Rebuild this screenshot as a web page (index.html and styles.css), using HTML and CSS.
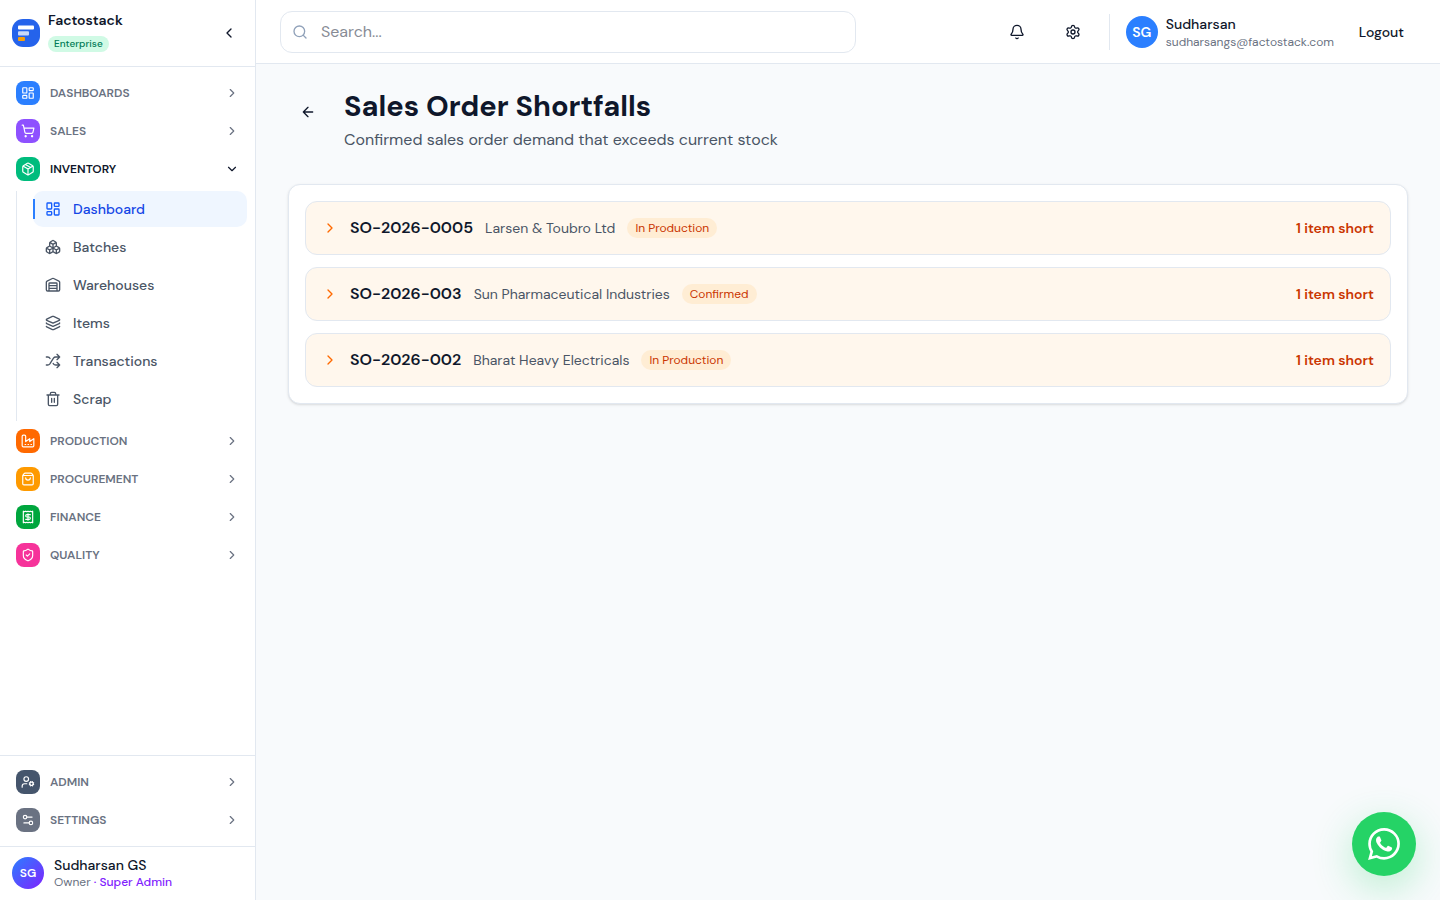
FILE: index.html
```html
<!DOCTYPE html>
<html lang="en">
<head>
<meta charset="utf-8">
<meta name="viewport" content="width=device-width, initial-scale=1">
<title>Sales Order Shortfalls</title>
<link rel="stylesheet" href="styles.css">
</head>
<body>
<svg class="sprite" aria-hidden="true">
  <symbol id="i-left" viewBox="0 0 24 24"><path d="m15 18-6-6 6-6"/></symbol>
  <symbol id="i-right" viewBox="0 0 24 24"><path d="m9 18 6-6-6-6"/></symbol>
  <symbol id="i-down" viewBox="0 0 24 24"><path d="m6 9 6 6 6-6"/></symbol>
  <symbol id="i-arrow" viewBox="0 0 24 24"><path d="m12 19-7-7 7-7M19 12H5"/></symbol>
  <symbol id="i-search" viewBox="0 0 24 24"><circle cx="11" cy="11" r="8"/><path d="m21 21-4.3-4.3"/></symbol>
  <symbol id="i-bell" viewBox="0 0 24 24"><path d="M10.268 21a2 2 0 0 0 3.464 0M3.262 15.326A1 1 0 0 0 4 17h16a1 1 0 0 0 .74-1.673C19.41 13.956 18 12.499 18 8A6 6 0 0 0 6 8c0 4.499-1.411 5.956-2.738 7.326"/></symbol>
  <symbol id="i-gear" viewBox="0 0 24 24"><path d="M9.671 4.136a2.34 2.34 0 0 1 4.659 0 2.34 2.34 0 0 0 3.319 1.915 2.34 2.34 0 0 1 2.33 4.033 2.34 2.34 0 0 0 0 3.831 2.34 2.34 0 0 1-2.33 4.033 2.34 2.34 0 0 0-3.319 1.915 2.34 2.34 0 0 1-4.659 0 2.34 2.34 0 0 0-3.32-1.915 2.34 2.34 0 0 1-2.33-4.033 2.34 2.34 0 0 0 0-3.831A2.34 2.34 0 0 1 6.35 6.051a2.34 2.34 0 0 0 3.319-1.915"/><circle cx="12" cy="12" r="3"/></symbol>
  <symbol id="i-dash" viewBox="0 0 24 24"><rect width="7" height="9" x="3" y="3" rx="1"/><rect width="7" height="5" x="14" y="3" rx="1"/><rect width="7" height="9" x="14" y="12" rx="1"/><rect width="7" height="5" x="3" y="16" rx="1"/></symbol>
  <symbol id="i-cart" viewBox="0 0 24 24"><circle cx="8" cy="21" r="1"/><circle cx="19" cy="21" r="1"/><path d="M2.05 2.05h2l2.66 12.42a2 2 0 0 0 2 1.58h9.78a2 2 0 0 0 1.95-1.57l1.65-7.43H5.12"/></symbol>
  <symbol id="i-package" viewBox="0 0 24 24"><path d="M11 21.73a2 2 0 0 0 2 0l7-4A2 2 0 0 0 21 16V8a2 2 0 0 0-1-1.73l-7-4a2 2 0 0 0-2 0l-7 4A2 2 0 0 0 3 8v8a2 2 0 0 0 1 1.73zM12 22V12M3.29 7 12 12l8.71-5M7.5 4.27l9 5.15"/></symbol>
  <symbol id="i-boxes" viewBox="0 0 24 24"><path d="M2.97 12.92A2 2 0 0 0 2 14.63v3.24a2 2 0 0 0 .97 1.71l3 1.8a2 2 0 0 0 2.06 0L12 19v-5.5l-5-3ZM7 16.5l-4.74-2.85M7 16.5l5-3M7 16.5v5.17M12 13.5V19l3.97 2.38a2 2 0 0 0 2.06 0l3-1.8a2 2 0 0 0 .97-1.71v-3.24a2 2 0 0 0-.97-1.71L17 10.5ZM17 16.5l-5-3M17 16.5l4.74-2.85M17 16.5v5.17M7.97 4.42A2 2 0 0 0 7 6.13v4.37l5 3 5-3V6.13a2 2 0 0 0-.97-1.71l-3-1.8a2 2 0 0 0-2.06 0ZM12 8 7.26 5.15M12 8l4.74-2.85M12 13.5V8"/></symbol>
  <symbol id="i-warehouse" viewBox="0 0 24 24"><path d="M18 21V10a1 1 0 0 0-1-1H7a1 1 0 0 0-1 1v11M22 19a2 2 0 0 1-2 2H4a2 2 0 0 1-2-2V8a2 2 0 0 1 1.132-1.803l7.95-3.974a2 2 0 0 1 1.837 0l7.948 3.974A2 2 0 0 1 22 8zM6 13h12M6 17h12"/></symbol>
  <symbol id="i-layers" viewBox="0 0 24 24"><path d="M12.83 2.18a2 2 0 0 0-1.66 0L2.6 6.08a1 1 0 0 0 0 1.83l8.58 3.91a2 2 0 0 0 1.66 0l8.58-3.9a1 1 0 0 0 0-1.83zM2 12a1 1 0 0 0 .58.91l8.6 3.91a2 2 0 0 0 1.65 0l8.58-3.9A1 1 0 0 0 22 12M2 17a1 1 0 0 0 .58.91l8.6 3.91a2 2 0 0 0 1.65 0l8.58-3.9A1 1 0 0 0 22 17"/></symbol>
  <symbol id="i-shuffle" viewBox="0 0 24 24"><path d="m18 14 4 4-4 4M18 2l4 4-4 4M2 18h1.973a4 4 0 0 0 3.3-1.7l5.454-8.6a4 4 0 0 1 3.3-1.7H22M2 6h1.972a4 4 0 0 1 3.6 2.2M22 18h-6.041a4 4 0 0 1-3.3-1.8l-.359-.45"/></symbol>
  <symbol id="i-trash" viewBox="0 0 24 24"><path d="M10 11v6M14 11v6M19 6v14a2 2 0 0 1-2 2H7a2 2 0 0 1-2-2V6M3 6h18M8 6V4a2 2 0 0 1 2-2h4a2 2 0 0 1 2 2v2"/></symbol>
  <symbol id="i-factory" viewBox="0 0 24 24"><path d="M2 20a2 2 0 0 0 2 2h16a2 2 0 0 0 2-2V8l-7 5V8l-7 5V4a2 2 0 0 0-2-2H4a2 2 0 0 0-2 2ZM17 18h1M12 18h1M7 18h1"/></symbol>
  <symbol id="i-bag" viewBox="0 0 24 24"><path d="M16 10a4 4 0 0 1-8 0M3.103 6.034h17.794M3.4 5.467a2 2 0 0 0-.4 1.2V20a2 2 0 0 0 2 2h14a2 2 0 0 0 2-2V6.667a2 2 0 0 0-.4-1.2l-2-2.667A2 2 0 0 0 17 2H7a2 2 0 0 0-1.6.8z"/></symbol>
  <symbol id="i-receipt" viewBox="0 0 24 24"><path d="M4 2v20l2-1 2 1 2-1 2 1 2-1 2 1 2-1 2 1V2l-2 1-2-1-2 1-2-1-2 1-2-1-2 1ZM16 8h-6a2 2 0 1 0 0 4h4a2 2 0 1 1 0 4H8M12 17.5v-11"/></symbol>
  <symbol id="i-shield" viewBox="0 0 24 24"><path d="M20 13c0 5-3.5 7.5-7.66 8.95a1 1 0 0 1-.67-.01C7.5 20.5 4 18 4 13V6a1 1 0 0 1 1-1c2 0 4.5-1.2 6.24-2.72a1.17 1.17 0 0 1 1.52 0C14.51 3.81 17 5 19 5a1 1 0 0 1 1 1zM9 12l2 2 4-4"/></symbol>
  <symbol id="i-usercog" viewBox="0 0 24 24"><circle cx="18" cy="15" r="3"/><circle cx="9" cy="7" r="4"/><path d="M10 15H6a4 4 0 0 0-4 4v2M21.7 16.4l-.9-.3M15.2 13.9l-.9-.3M16.6 18.7l.3-.9M19.1 12.2l.3-.9M19.6 18.7l-.4-1M16.8 12.3l-.4-1M14.3 16.6l1-.4M20.7 13.8l1-.4"/></symbol>
  <symbol id="i-sliders" viewBox="0 0 24 24"><path d="M14 17H5M19 7h-9"/><circle cx="17" cy="17" r="3"/><circle cx="7" cy="7" r="3"/></symbol>
</svg>

<div class="app">
  <aside class="sidebar">
    <div class="brand">
      <svg class="brand-logo" viewBox="0 0 28 28" aria-hidden="true"><rect width="28" height="28" rx="11" fill="#2563eb"/><rect x="6" y="6.4" width="16" height="4.2" rx="1" fill="#fff"/><rect x="6" y="12.2" width="11" height="4.2" rx="1" fill="#fff" opacity=".75"/><rect x="6" y="18" width="7" height="4" rx="1" fill="#f59e0b"/></svg>
      <div class="brand-text">
        <span class="brand-name">Factostack</span>
        <span class="plan">Enterprise</span>
      </div>
      <button class="collapse" type="button" aria-label="Collapse sidebar"><svg class="icon"><use href="#i-left"/></svg></button>
    </div>

    <nav class="nav" aria-label="Main">
      <button class="section" type="button"><span class="tile blue"><svg class="icon"><use href="#i-dash"/></svg></span>DASHBOARDS<svg class="icon chevron"><use href="#i-right"/></svg></button>
      <button class="section" type="button"><span class="tile violet"><svg class="icon"><use href="#i-cart"/></svg></span>SALES<svg class="icon chevron"><use href="#i-right"/></svg></button>
      <button class="section open" type="button" aria-expanded="true"><span class="tile emerald"><svg class="icon"><use href="#i-package"/></svg></span>INVENTORY<svg class="icon chevron"><use href="#i-down"/></svg></button>
      <div class="subnav">
        <a class="link active" href="#" aria-current="page"><svg class="icon"><use href="#i-dash"/></svg>Dashboard</a>
        <a class="link" href="#"><svg class="icon"><use href="#i-boxes"/></svg>Batches</a>
        <a class="link" href="#"><svg class="icon"><use href="#i-warehouse"/></svg>Warehouses</a>
        <a class="link" href="#"><svg class="icon"><use href="#i-layers"/></svg>Items</a>
        <a class="link" href="#"><svg class="icon"><use href="#i-shuffle"/></svg>Transactions</a>
        <a class="link" href="#"><svg class="icon"><use href="#i-trash"/></svg>Scrap</a>
      </div>
      <button class="section" type="button"><span class="tile orange"><svg class="icon"><use href="#i-factory"/></svg></span>PRODUCTION<svg class="icon chevron"><use href="#i-right"/></svg></button>
      <button class="section" type="button"><span class="tile amber"><svg class="icon"><use href="#i-bag"/></svg></span>PROCUREMENT<svg class="icon chevron"><use href="#i-right"/></svg></button>
      <button class="section" type="button"><span class="tile green"><svg class="icon"><use href="#i-receipt"/></svg></span>FINANCE<svg class="icon chevron"><use href="#i-right"/></svg></button>
      <button class="section" type="button"><span class="tile pink"><svg class="icon"><use href="#i-shield"/></svg></span>QUALITY<svg class="icon chevron"><use href="#i-right"/></svg></button>
    </nav>

    <nav class="nav nav-bottom" aria-label="Administration">
      <button class="section" type="button"><span class="tile slate"><svg class="icon"><use href="#i-usercog"/></svg></span>ADMIN<svg class="icon chevron"><use href="#i-right"/></svg></button>
      <button class="section" type="button"><span class="tile gray"><svg class="icon"><use href="#i-sliders"/></svg></span>SETTINGS<svg class="icon chevron"><use href="#i-right"/></svg></button>
    </nav>

    <div class="account">
      <span class="avatar gradient">SG</span>
      <div class="account-text">
        <span class="account-name">Sudharsan GS</span>
        <span class="account-role">Owner <span class="role">· Super Admin</span></span>
      </div>
    </div>
  </aside>

  <div class="content">
    <header class="topbar">
      <label class="search">
        <svg class="icon"><use href="#i-search"/></svg>
        <input type="search" placeholder="Search..." aria-label="Search">
      </label>
      <div class="actions">
        <button class="icon-button" type="button" aria-label="Notifications"><svg class="icon"><use href="#i-bell"/></svg></button>
        <button class="icon-button" type="button" aria-label="Settings"><svg class="icon"><use href="#i-gear"/></svg></button>
        <div class="user">
          <span class="avatar solid">SG</span>
          <div class="user-text">
            <span class="user-name">Sudharsan</span>
            <span class="user-mail">sudharsangs@factostack.com</span>
          </div>
          <button class="logout" type="button">Logout</button>
        </div>
      </div>
    </header>

    <main class="page">
      <div class="page-head">
        <button class="back" type="button" aria-label="Back"><svg class="icon"><use href="#i-arrow"/></svg></button>
        <div>
          <h1 class="title">Sales Order Shortfalls</h1>
          <p class="subtitle">Confirmed sales order demand that exceeds current stock</p>
        </div>
      </div>

      <section class="card">
        <button class="order" type="button"><svg class="icon"><use href="#i-right"/></svg><span class="order-id">SO-2026-0005</span><span class="customer">Larsen &amp; Toubro Ltd</span><span class="status">In Production</span><span class="short">1 item short</span></button>
        <button class="order" type="button"><svg class="icon"><use href="#i-right"/></svg><span class="order-id">SO-2026-003</span><span class="customer">Sun Pharmaceutical Industries</span><span class="status">Confirmed</span><span class="short">1 item short</span></button>
        <button class="order" type="button"><svg class="icon"><use href="#i-right"/></svg><span class="order-id">SO-2026-002</span><span class="customer">Bharat Heavy Electricals</span><span class="status">In Production</span><span class="short">1 item short</span></button>
      </section>
    </main>
  </div>
</div>

<a class="whatsapp" href="#" aria-label="Chat on WhatsApp">
  <svg viewBox="0 0 24 24" aria-hidden="true"><path d="M17.472 14.382c-.297-.149-1.758-.867-2.03-.967-.273-.099-.471-.148-.67.15-.197.297-.767.966-.94 1.164-.173.199-.347.223-.644.075-.297-.15-1.255-.463-2.39-1.475-.883-.788-1.48-1.761-1.653-2.059-.173-.297-.018-.458.13-.606.134-.133.298-.347.446-.52.149-.174.198-.298.298-.497.099-.198.05-.371-.025-.52-.075-.149-.669-1.612-.916-2.207-.242-.579-.487-.5-.669-.51-.173-.008-.371-.01-.57-.01-.198 0-.52.074-.792.372-.272.297-1.04 1.016-1.04 2.479 0 1.462 1.065 2.875 1.213 3.074.149.198 2.096 3.2 5.077 4.487.709.306 1.262.489 1.694.625.712.227 1.36.195 1.871.118.571-.085 1.758-.719 2.006-1.413.248-.694.248-1.289.173-1.413-.074-.124-.272-.198-.57-.347m-5.421 7.403h-.004a9.87 9.87 0 0 1-5.031-1.378l-.361-.214-3.741.982.998-3.648-.235-.374a9.86 9.86 0 0 1-1.51-5.26c.001-5.45 4.436-9.884 9.888-9.884 2.64 0 5.122 1.03 6.988 2.898a9.825 9.825 0 0 1 2.893 6.994c-.003 5.45-4.437 9.884-9.885 9.884m8.413-18.297A11.815 11.815 0 0 0 12.05 0C5.495 0 .16 5.335.157 11.892c0 2.096.547 4.142 1.588 5.945L.057 24l6.305-1.654a11.882 11.882 0 0 0 5.683 1.448h.005c6.554 0 11.89-5.335 11.893-11.893a11.821 11.821 0 0 0-3.48-8.413z"/></svg>
</a>
</body>
</html>
```
FILE: styles.css
```css
*,
*::before {
  box-sizing: border-box;
}

body {
  margin: 0;
  background: #f8fafc;
  color: #0f172b;
  font-family: "DM Sans", Inter, "Liberation Sans", sans-serif;
  font-size: 14px;
  line-height: 20px;
}

button,
input {
  font: inherit;
  color: inherit;
}

button {
  padding: 0;
  border: 0;
  background: none;
  cursor: pointer;
}

a {
  color: inherit;
  text-decoration: none;
}

.sprite {
  display: none;
}

.icon {
  flex: none;
  width: 16px;
  height: 16px;
  fill: none;
  stroke: currentColor;
  stroke-width: 2;
  stroke-linecap: round;
  stroke-linejoin: round;
}

.app {
  display: flex;
  min-height: 100vh;
}

/* Sidebar */
.sidebar {
  display: flex;
  flex: none;
  flex-direction: column;
  width: 256px;
  border-right: 1px solid #e2e8f0;
  background: #fff;
}

.brand {
  display: flex;
  align-items: center;
  gap: 8px;
  padding: 12px;
  border-bottom: 1px solid #e2e8f0;
}

.brand-logo {
  width: 28px;
  height: 28px;
}

.brand-text {
  display: flex;
  flex: 1;
  flex-direction: column;
  align-items: flex-start;
  gap: 8px;
  padding-bottom: 2px;
}

.brand-name {
  font-weight: 600;
  line-height: 16px;
}

.plan {
  padding: 0 6px;
  border-radius: 8px;
  background: #d0fae5;
  color: #007a55;
  font-size: 10px;
  font-weight: 500;
  line-height: 16px;
}

.collapse {
  display: grid;
  place-items: center;
  width: 28px;
  height: 28px;
}

.nav {
  display: flex;
  flex: 1;
  flex-direction: column;
  gap: 2px;
  padding: 8px;
}

.nav-bottom {
  flex: none;
  border-top: 1px solid #e2e8f0;
}

.section {
  display: flex;
  align-items: center;
  gap: 10px;
  height: 36px;
  padding: 0 8px;
  color: #6a7282;
  font-size: 12px;
  font-weight: 600;
  line-height: 16px;
}

.section.open {
  color: #0f172b;
}

.tile {
  display: grid;
  place-items: center;
  width: 24px;
  height: 24px;
  border-radius: 8px;
  color: #fff;
}

.tile .icon,
.chevron {
  width: 14px;
  height: 14px;
}

.chevron {
  margin-left: auto;
}

.blue { background: #2b7fff; }
.violet { background: #8e51ff; }
.emerald { background: #00bc7d; }
.orange { background: #ff6900; }
.amber { background: #fe9a00; }
.green { background: #00a63e; }
.pink { background: #f6339a; }
.slate { background: #45556c; }
.gray { background: #6a7282; }

.subnav {
  display: flex;
  flex-direction: column;
  gap: 2px;
  margin: 2px 0 0 8px;
  padding: 0 0 4px 16px;
  border-left: 1px solid #e2e8f0;
}

.link {
  position: relative;
  display: flex;
  align-items: center;
  gap: 12px;
  height: 36px;
  padding: 0 12px;
  border-radius: 10px;
  color: #4a5565;
  font-weight: 500;
}

.link.active {
  background: #eff6ff;
  color: #1447e6;
}

.link.active .icon {
  color: #155dfc;
}

.link.active::before {
  content: "";
  position: absolute;
  top: 8px;
  bottom: 8px;
  left: 0;
  width: 2px;
  background: #2b7fff;
}

.account {
  display: flex;
  align-items: center;
  gap: 10px;
  padding: 9px 12px 10px;
  border-top: 1px solid #e2e8f0;
}

.avatar {
  display: grid;
  flex: none;
  place-items: center;
  width: 32px;
  height: 32px;
  border-radius: 50%;
  color: #fff;
}

.gradient {
  background: linear-gradient(135deg, #2b7fff, #7f22fe);
  font-size: 12px;
  font-weight: 600;
}

.solid {
  background: #2b7fff;
  font-weight: 600;
}

.account-text,
.user-text {
  display: flex;
  flex-direction: column;
}

.account-name,
.user-name {
  font-weight: 500;
}

.account-name {
  line-height: 18px;
}

.account-role,
.user-mail {
  color: #6a7282;
  font-size: 12px;
  line-height: 16px;
}

.role {
  color: #7f22fe;
  font-weight: 500;
}

/* Top bar */
.content {
  display: flex;
  flex: 1;
  flex-direction: column;
  min-width: 0;
}

.topbar {
  display: flex;
  align-items: center;
  justify-content: space-between;
  gap: 16px;
  height: 64px;
  padding: 0 24px;
  border-bottom: 1px solid #e2e8f0;
  background: #fff;
}

.search {
  display: flex;
  flex: 0 1 576px;
  align-items: center;
  gap: 13px;
  height: 42px;
  padding: 0 11px;
  border: 1px solid #e2e8f0;
  border-radius: 12px;
  color: #90a1b9;
}

.search input {
  flex: 1;
  min-width: 0;
  padding: 0;
  border: 0;
  outline: 0;
  background: none;
  color: #0f172b;
  font-size: 16px;
}

.search input::placeholder {
  color: #878b95;
}

.actions {
  display: flex;
  align-items: center;
  gap: 16px;
}

.icon-button {
  display: grid;
  place-items: center;
  width: 40px;
  height: 36px;
}

.user {
  display: flex;
  align-items: center;
  gap: 8px;
  padding-left: 16px;
  border-left: 1px solid #e2e8f0;
}

.user-text {
  min-width: 169px;
}

.logout {
  margin-left: 4px;
  padding: 0 12px;
  font-weight: 500;
}

/* Page */
.page {
  padding: 24px 32px;
}

.page-head {
  display: flex;
  align-items: flex-start;
  gap: 16px;
  margin-bottom: 32px;
}

.back {
  display: grid;
  place-items: center;
  width: 40px;
  height: 48px;
}

.title {
  margin: 0 0 4px;
  font-size: 29px;
  font-weight: 700;
  line-height: 36px;
}

.subtitle {
  margin: 0;
  color: #4a5565;
  font-size: 16px;
  line-height: 24px;
}

.card {
  display: flex;
  flex-direction: column;
  gap: 12px;
  padding: 16px;
  border: 1px solid #e2e8f0;
  border-radius: 12px;
  background: #fff;
  box-shadow: 0 1px 3px rgb(0 0 0 / 10%), 0 1px 2px -1px rgb(0 0 0 / 10%);
}

.order {
  display: flex;
  align-items: center;
  gap: 12px;
  height: 54px;
  padding: 0 16px;
  border: 1px solid #e2e8f0;
  border-radius: 12px;
  background: #fff7ed;
}

.order .icon {
  color: #ff6900;
}

.order-id {
  font-size: 16px;
  font-weight: 600;
}

.customer {
  color: #4a5565;
}

.status {
  padding: 0 8px;
  border-radius: 10px;
  background: #ffedd4;
  color: #ca3500;
  font-size: 12px;
}

.short {
  margin-left: auto;
  color: #ca3500;
  font-weight: 600;
}

.whatsapp {
  position: fixed;
  right: 24px;
  bottom: 24px;
  display: grid;
  place-items: center;
  width: 64px;
  height: 64px;
  border-radius: 50%;
  background: #25d366;
  box-shadow: 0 12px 40px rgb(37 211 102 / 30%);
}

.whatsapp svg {
  width: 32px;
  height: 32px;
  fill: #fff;
}
```
